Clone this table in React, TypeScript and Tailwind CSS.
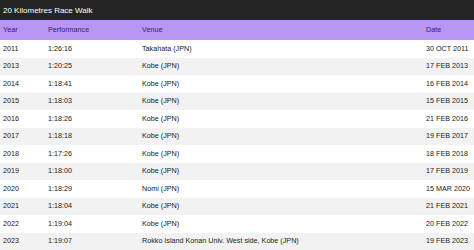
import React from "react";

const rows = [
  ["2011", "1:26:16", "Takahata (JPN)", "30 OCT 2011"],
  ["2013", "1:20:25", "Kobe (JPN)", "17 FEB 2013"],
  ["2014", "1:18:41", "Kobe (JPN)", "16 FEB 2014"],
  ["2015", "1:18:03", "Kobe (JPN)", "15 FEB 2015"],
  ["2016", "1:18:26", "Kobe (JPN)", "21 FEB 2016"],
  ["2017", "1:18:18", "Kobe (JPN)", "19 FEB 2017"],
  ["2018", "1:17:26", "Kobe (JPN)", "18 FEB 2018"],
  ["2019", "1:18:00", "Kobe (JPN)", "17 FEB 2019"],
  ["2020", "1:18:29", "Nomi (JPN)", "15 MAR 2020"],
  ["2021", "1:18:04", "Kobe (JPN)", "21 FEB 2021"],
  ["2022", "1:19:04", "Kobe (JPN)", "20 FEB 2022"],
  ["2023", "1:19:07", "Rokko Island Konan Univ. West side, Kobe (JPN)", "19 FEB 2023"],
];

export default function App() {
  return (
    <div
      className="w-[474px] h-[250px] overflow-hidden bg-white"
      style={{ fontFamily: '"Liberation Sans", Arial, sans-serif' }}
    >
      <div className="h-[20px] bg-[#242424] text-white text-[8px] flex items-center pl-[3px] pt-[1px]">
        20 Kilometres Race Walk
      </div>
      <div className="h-[20px] bg-[#b996f4] text-[#3a1b6b] text-[7.2px] flex items-center pt-[1px]">
        <div className="w-[48px] pl-[3px]">Year</div>
        <div className="w-[94px]">Performance</div>
        <div className="w-[284px]">Venue</div>
        <div className="flex-1">Date</div>
      </div>
      {rows.map((r, i) => (
        <div
          key={r[0]}
          className={`h-[17.5px] flex items-center text-[7.2px] text-[#1a1a1a] pt-[1px] ${i % 2 === 1 ? "bg-[#f2f2f2]" : "bg-white"}`}
        >
          <div className="w-[48px] pl-[3px]">{r[0]}</div>
          <div className="w-[94px]">{r[1]}</div>
          <div className="w-[284px] whitespace-nowrap">{r[2]}</div>
          <div className="flex-1 whitespace-nowrap">{r[3]}</div>
        </div>
      ))}
    </div>
  );
}
